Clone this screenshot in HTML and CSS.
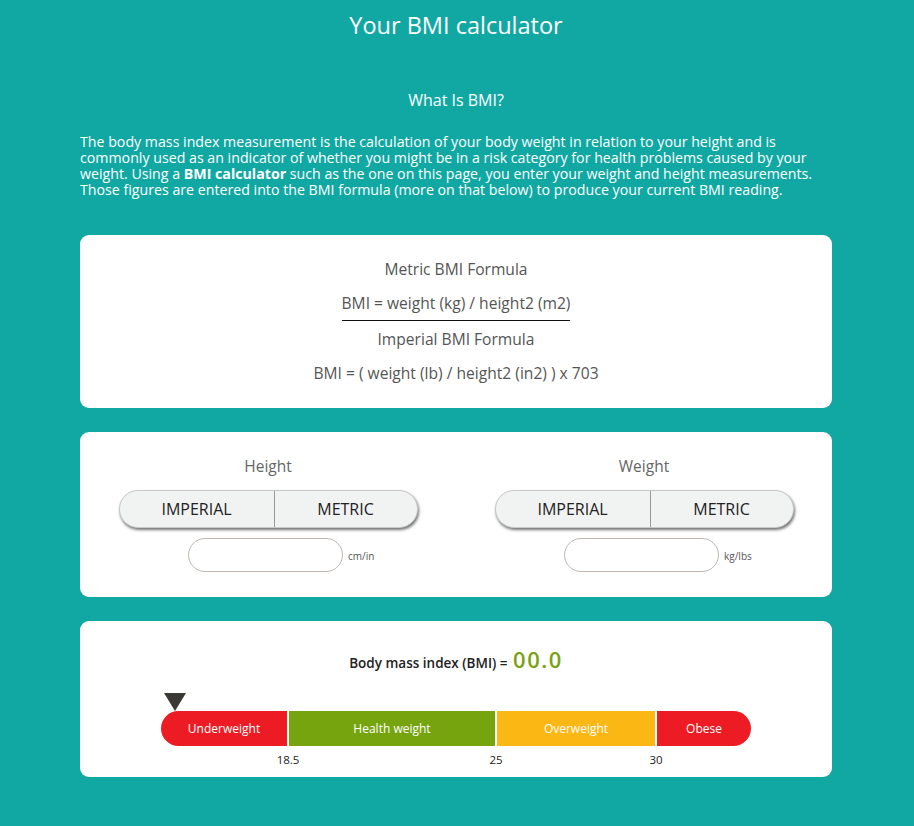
FILE: index.html
```html
<!DOCTYPE html>
<html lang="en">
<head>
<meta charset="utf-8">
<title>Your BMI calculator</title>
<link rel="stylesheet" href="styles.css">
</head>
<body>
<main class="page">
  <h1 class="title">Your BMI calculator</h1>
  <h2 class="subtitle">What Is BMI?</h2>
  <p class="intro">The body mass index measurement is the calculation of your body weight in relation to your height and is commonly used as an indicator of whether you might be in a risk category for health problems caused by your weight. Using a <strong>BMI calculator</strong> such as the one on this page, you enter your weight and height measurements. Those figures are entered into the BMI formula (more on that below) to produce your current BMI reading.</p>

  <section class="card formulas">
    <div class="f-row">Metric BMI Formula</div>
    <div class="f-row"><span class="f-line">BMI = weight (kg) / height2 (m2)</span></div>
    <div class="f-row f-after">Imperial BMI Formula</div>
    <div class="f-row">BMI = ( weight (lb) / height2 (in2) ) x 703</div>
  </section>

  <section class="card inputs">
    <div class="col">
      <div class="col-label">Height</div>
      <div class="toggle">
        <button class="tbtn tbtn-left">IMPERIAL</button>
        <button class="tbtn tbtn-right">METRIC</button>
      </div>
      <div class="field">
        <input class="num" type="text">
        <span class="unit">cm/in</span>
      </div>
    </div>
    <div class="col">
      <div class="col-label">Weight</div>
      <div class="toggle">
        <button class="tbtn tbtn-left">IMPERIAL</button>
        <button class="tbtn tbtn-right">METRIC</button>
      </div>
      <div class="field">
        <input class="num" type="text">
        <span class="unit">kg/lbs</span>
      </div>
    </div>
  </section>

  <section class="card result">
    <div class="bmi-line">Body mass index (BMI) = <span class="bmi-val">00.0</span></div>
    <div class="scale">
      <div class="pointer"></div>
      <div class="bar">
        <div class="seg seg-under">Underweight</div>
        <div class="seg seg-health">Health weight</div>
        <div class="seg seg-over">Overweight</div>
        <div class="seg seg-obese">Obese</div>
      </div>
      <div class="ticks">
        <span class="tick">18.5</span>
        <span class="tick">25</span>
        <span class="tick">30</span>
        <span></span>
      </div>
    </div>
  </section>
</main>
</body>
</html>
```
FILE: styles.css
```css
* { box-sizing: border-box; }
html, body { margin: 0; padding: 0; }
body {
  background: #11a8a4;
  font-family: "Open Sans", "Liberation Sans", sans-serif;
  color: #fff;
  min-height: 826px;
}
.page {
  width: 752px;
  margin: 0 0 0 80px;
  padding-bottom: 49px;
}
.title {
  margin: 0;
  padding-top: 10px;
  font-size: 23.5px;
  line-height: 30px;
  font-weight: 400;
  text-align: center;
}
.subtitle {
  margin: 50px 0 0;
  font-size: 16px;
  line-height: 20px;
  font-weight: 400;
  text-align: center;
}
.intro {
  margin: 24px 0 0;
  font-size: 14.2px;
  line-height: 16px;
}
.intro strong { font-weight: 700; }

.card {
  background: #fff;
  border-radius: 9px;
  color: #555;
}
.formulas {
  margin-top: 37px;
  padding: 24px 0 25px;
  text-align: center;
  font-size: 15.6px;
}
.f-row { line-height: 20px; }
.f-row + .f-row { margin-top: 14px; }
.f-line {
  display: inline-block;
  padding-bottom: 7px;
  border-bottom: 1px solid #111;
}
.f-row.f-after { margin-top: 8px; }

.inputs {
  margin-top: 24px;
  padding: 24px 0 25px;
  display: grid;
  grid-template-columns: 1fr 1fr;
}
.col { display: flex; flex-direction: column; align-items: center; }
.col-label { font-size: 15.5px; line-height: 20px; color: #666; }
.toggle {
  margin-top: 14px;
  display: flex;
  height: 38px;
  border-radius: 19px;
  background: #f1f2f2;
  box-shadow: 1px 2px 3px rgba(0,0,0,0.55);
  border: 1px solid #c9c9c9;
  overflow: hidden;
}
.tbtn {
  border: 0;
  background: transparent;
  font-family: inherit;
  font-size: 16px;
  color: #222;
  padding: 0;
}
.tbtn-left { width: 155px; border-right: 1px solid #999; }
.tbtn-right { width: 142px; }
.field {
  margin-top: 10px;
  align-self: flex-start;
  margin-left: 108px;
  display: flex;
  align-items: center;
  gap: 5px;
}
.num {
  width: 155px;
  height: 34px;
  border: 1px solid #bdb7b0;
  border-radius: 17px;
  background: #fff;
  outline: none;
}
.unit { font-size: 10px; color: #555; padding-top: 2px; }

.result {
  margin-top: 24px;
  padding: 28px 0 9px;
  color: #222;
}
.bmi-line {
  height: 28px;
  text-align: center;
  font-size: 13.5px;
  font-weight: 600;
  line-height: 28px;
}
.bmi-val {
  color: #77a313;
  font-size: 22px;
  line-height: 20px;
  font-weight: 600;
  letter-spacing: 1.5px;
  margin-left: 2px;
}
.scale {
  width: 590px;
  margin: 16px auto 0;
}
.pointer {
  width: 0;
  height: 0;
  margin-left: 3px;
  border-left: 11px solid transparent;
  border-right: 11px solid transparent;
  border-top: 18px solid #3b3935;
}
.bar {
  display: grid;
  grid-template-columns: 126px 206px 158px 94px;
  gap: 2px;
  height: 35px;
}
.seg {
  display: flex;
  align-items: center;
  justify-content: center;
  color: #fff;
  font-size: 12px;
}
.seg-under { background: #ed1c24; border-radius: 18px 0 0 18px; }
.seg-health { background: #76a40f; }
.seg-over { background: #fbb714; }
.seg-obese { background: #ed1c24; border-radius: 0 18px 18px 0; }
.ticks {
  display: grid;
  grid-template-columns: 127px 208px 160px 95px;
  height: 22px;
  align-items: center;
  font-size: 11.5px;
  color: #222;
  padding-top: 4px;
}
.tick { justify-self: end; transform: translateX(50%); }
```
